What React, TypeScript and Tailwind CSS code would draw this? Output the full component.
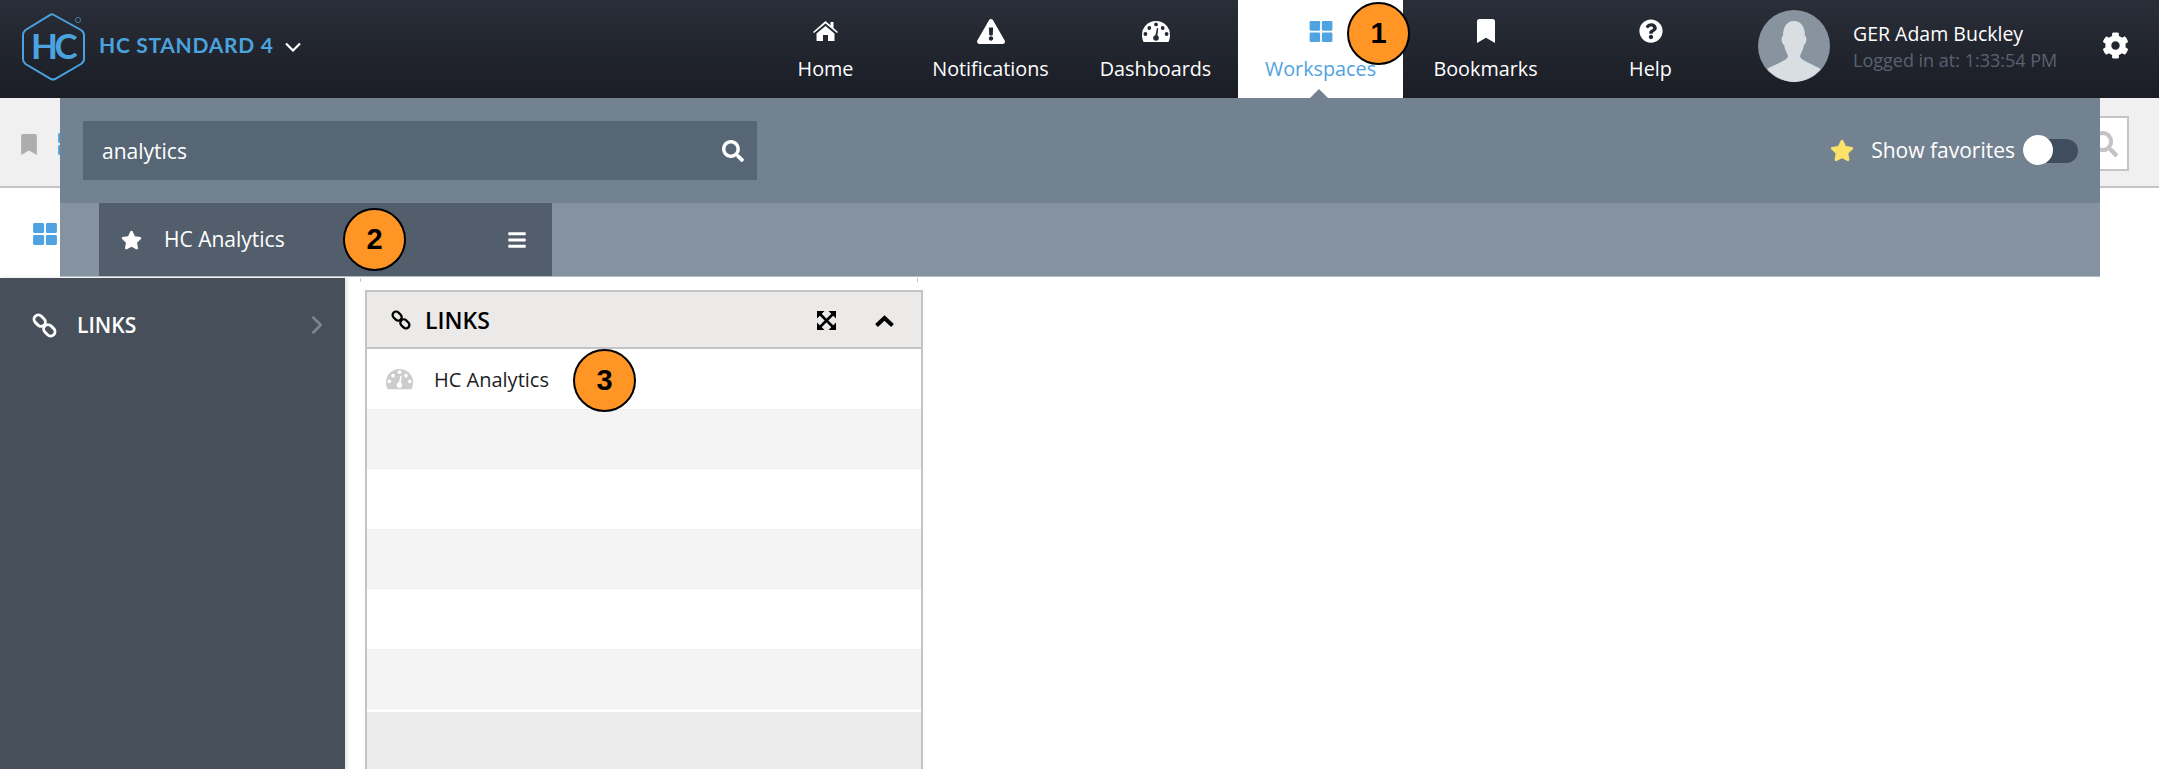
import React from 'react';
import {
  FaBars,
  FaBookmark,
  FaCog,
  FaExclamationTriangle,
  FaQuestionCircle,
  FaSearch,
  FaStar,
} from 'react-icons/fa';
import { LuChevronRight } from 'react-icons/lu';

// Four rounded squares used for workspaces
const GridIcon = ({ className }: { className: string }) => (
  <svg viewBox="0 0 26 24" className={className} fill="currentColor">
    <rect x="0" y="0" width="12" height="11" rx="1.5" />
    <rect x="14" y="0" width="12" height="11" rx="1.5" />
    <rect x="0" y="13" width="12" height="11" rx="1.5" />
    <rect x="14" y="13" width="12" height="11" rx="1.5" />
  </svg>
);

const HomeIcon = ({ className }: { className: string }) => (
  <svg viewBox="0 0 25 20" className={className} fill="currentColor">
    <path d="M12.5 0 L0 11 L1 12 L12.5 2.6 L24 12 L25 11 L20.5 7 V1 H17.5 V4.3 Z" />
    <path d="M3.5 12.4 L12.5 5 L21.5 12.4 V20 H15 V14 H10 V20 H3.5 Z" />
  </svg>
);

// Half disc gauge with punched out dots and needle
const GaugeIcon = ({ className }: { className: string }) => (
  <svg viewBox="0 0 28 21" className={className}>
    <path fill="currentColor" d="M14 0 A14 14 0 0 1 28 14 C28 16.5 27.4 19 26.4 21 H1.6 C0.6 19 0 16.5 0 14 A14 14 0 0 1 14 0 Z" />
    <g fill="var(--hole)">
      <circle cx="14" cy="3.4" r="1.9" />
      <circle cx="7.3" cy="7" r="1.9" />
      <circle cx="20.7" cy="7" r="1.9" />
      <circle cx="3.4" cy="13" r="1.9" />
      <circle cx="24.6" cy="13" r="1.9" />
      <circle cx="14" cy="17" r="2.8" />
      <path d="M13 16 L15 7 L16.2 7.3 L15.2 16.5 Z" />
    </g>
  </svg>
);

// Two open chain links running from top left to bottom right
const ChainIcon = ({ className }: { className: string }) => (
  <svg viewBox="-1 -1 26 26" className={className} fill="none" stroke="currentColor" strokeWidth="3">
    <rect x="0.5" y="2.5" width="13" height="9" rx="4.5" transform="rotate(45 7 7)" />
    <rect x="10.5" y="12.5" width="13" height="9" rx="4.5" transform="rotate(45 17 17)" />
  </svg>
);

const ExpandIcon = ({ className }: { className: string }) => (
  <svg viewBox="0 0 19 19" className={className} fill="currentColor">
    <path d="M0 0 H7.5 L0 7.5 Z M19 0 V7.5 L11.5 0 Z M0 19 V11.5 L7.5 19 Z M19 19 H11.5 L19 11.5 Z" />
    <path d="M3 3 L16 16 M16 3 L3 16" stroke="currentColor" strokeWidth="2.6" />
  </svg>
);

const ChevronUpIcon = ({ className }: { className: string }) => (
  <svg viewBox="0 0 19 12" className={className} fill="none" stroke="currentColor" strokeWidth="4">
    <path d="M1.5 10.5 L9.5 3 L17.5 10.5" />
  </svg>
);

const Logo = () => (
  <svg viewBox="0 0 66 70" className="mt-[5px] h-[70px] w-[66px]">
    <path
      d="M32 1.5 L60 17 Q63 19 63 22 L63 46 Q63 49 60 51 L34 66 Q32 67 30 66 L4.5 51 Q2 49 2 46 L2 22 Q2 19 4.5 17 L30 1.5 Q31 1 32 1.5 Z"
      fill="none"
      stroke="#4aa3df"
      strokeWidth="2"
    />
    <text x="10" y="46" fill="#4aa3df" fontSize="35" fontWeight="700" letterSpacing="-3.5" fontFamily="Lato, sans-serif">
      HC
    </text>
    <circle cx="57" cy="7" r="2.6" fill="none" stroke="#3b7aa8" strokeWidth="1" />
  </svg>
);

const Avatar = () => (
  <svg viewBox="0 0 72 72" className="h-[72px] w-[72px]">
    <circle cx="36" cy="36" r="36" fill="#87939f" />
    <path
      d="M36 11 C44 11 47 18 47 26 C49 26 49 33 46 35 C45 40 43 43 42 46 C42 50 52 53 63 59 C56 67 46 72 36 72 C26 72 16 67 9 59 C20 53 30 50 30 46 C29 43 27 40 26 35 C23 33 23 26 25 26 C25 18 28 11 36 11 Z"
      fill="#d9dee2"
    />
  </svg>
);

const Badge = ({ n, className }: { n: number; className: string }) => (
  <div
    className={`absolute flex h-[63px] w-[63px] items-center justify-center rounded-full border-2 border-black bg-[#ff9524] font-['Liberation_Sans',sans-serif] text-[29px] font-bold text-black ${className}`}
  >
    {n}
  </div>
);

const navItems = [
  { label: 'Home', icon: <HomeIcon className="h-[20px] w-[25px]" /> },
  { label: 'Notifications', icon: <FaExclamationTriangle className="h-[25px] w-[28px]" /> },
  { label: 'Dashboards', icon: <GaugeIcon className="h-[21px] w-[28px] [--hole:#262a33]" /> },
  { label: 'Workspaces', icon: <GridIcon className="h-[21px] w-[26px]" />, active: true },
  { label: 'Bookmarks', icon: <FaBookmark className="h-[24px] w-[20px]" /> },
  { label: 'Help', icon: <FaQuestionCircle className="h-[24px] w-[24px]" /> },
];

const NavBar = () => (
  <header className="flex h-[98px] items-center bg-gradient-to-b from-[#2a2e38] to-[#1a1d25] text-white">
    <div className="mb-[8px] flex w-[743px] items-center pl-[21px]">
      <Logo />
      <span className="ml-[12px] font-['Lato',sans-serif] text-[21px] font-bold tracking-[0.7px] text-[#4aa3df]">HC STANDARD 4</span>
      <svg viewBox="0 0 16 10" className="ml-[11px] mt-[4px] h-[10px] w-[16px]" fill="none" stroke="white" strokeWidth="2.2">
        <path d="M1 1.5 L8 8.5 L15 1.5" />
      </svg>
    </div>
    {navItems.map((item) => (
      <div
        key={item.label}
        className={`relative flex h-full w-[165px] flex-col items-center pt-[18px] ${item.active ? 'bg-white text-[#4fa3e0]' : ''}`}
      >
        <div className="flex h-[26px] items-center">{item.icon}</div>
        <span className="mt-[12px] text-[19.8px] leading-[26px]">{item.label}</span>
      </div>
    ))}
    <div className="mb-[7px] flex items-center">
      <div className="ml-[25px]">
        <Avatar />
      </div>
      <div className="ml-[23px] flex w-[249px] flex-col pt-[2px]">
        <span className="text-[19.5px] leading-[26px]">GER Adam Buckley</span>
        <span className="mt-[1px] text-[18px] leading-[24px] text-[#596270]">Logged in at: 1:33:54 PM</span>
      </div>
      <FaCog className="h-[27px] w-[27px]" />
    </div>
  </header>
);

const Toolbar = () => (
  <div className="flex h-[90px] items-start justify-between border-b-2 border-[#c4c4c4] bg-[#f0f0f0]">
    <div className="flex items-center pl-[20px] pt-[35px]">
      <FaBookmark className="h-[21px] w-[18px] text-[#adadad]" />
      <GridIcon className="ml-[20px] h-[22px] w-[24px] text-[#4fa3e0]" />
    </div>
    <div className="mr-[30px] mt-[18px] flex h-[55px] w-[60px] items-center justify-end border-2 border-l-0 border-[#c4c4c4] bg-white pr-[9px]">
      <FaSearch className="h-[26px] w-[26px] text-[#c4c4c4]" />
    </div>
  </div>
);

const WorkspacePanel = () => (
  <div className="absolute left-[60px] top-[98px] w-[2040px]">
    <div className="flex h-[105px] items-center justify-between bg-[#738291] pl-[23px] pr-[22px]">
      <div className="flex h-[59px] w-[674px] items-center justify-between bg-[#576675] pl-[19px] pr-[13px] text-white">
        <span className="pt-[2px] text-[21px]">analytics</span>
        <FaSearch className="h-[22px] w-[22px]" />
      </div>
      <div className="flex items-center text-white">
        <FaStar className="h-[23px] w-[24px] text-[#fde26a]" />
        <span className="ml-[17px] text-[21px]">Show favorites</span>
        <div className="relative ml-[8px] h-[24px] w-[55px] rounded-full bg-[#3f4d5e]">
          <div className="absolute left-0 top-[-4px] h-[30px] w-[30px] rounded-full bg-white" />
        </div>
      </div>
    </div>
    <div className="h-[74px] border-b border-[#b5bdc7] bg-[#8592a0] pl-[39px]">
      <div className="flex h-full w-[453px] items-center bg-[#535e6c] pl-[22px] pr-[25px] text-white">
        <FaStar className="h-[20px] w-[21px]" />
        <span className="ml-[22px] flex-1 text-[21px]">HC Analytics</span>
        <FaBars className="h-[20px] w-[20px]" />
      </div>
    </div>
  </div>
);

const Sidebar = () => (
  <aside className="flex w-[345px] items-start justify-between bg-[#474f5b] pl-[32px] pr-[13px] pt-[32px] text-white shadow-[2px_0_4px_rgba(0,0,0,0.12)]">
    <div className="flex h-[30px] items-center">
      <ChainIcon className="h-[25px] w-[25px]" />
      <span className="ml-[20px] pt-[2px] text-[21px] font-semibold">LINKS</span>
    </div>
    <LuChevronRight className="h-[30px] w-[30px] text-[#7d8793]" />
  </aside>
);

const LinksCard = () => (
  <div className="flex flex-1 flex-col border-x-2 border-t-2 border-[#c4c4c4]">
    <div className="flex h-[57px] items-center border-b-2 border-[#c4c4c4] bg-[#ebeae8] pl-[24px] pr-[27px] text-black">
      <ChainIcon className="h-[20px] w-[20px]" />
      <span className="ml-[14px] flex-1 pt-[2px] text-[23px] font-semibold">LINKS</span>
      <ExpandIcon className="mt-[2px] h-[19px] w-[19px]" />
      <ChevronUpIcon className="ml-[39px] mt-[2px] h-[12px] w-[19px]" />
    </div>
    <div className="flex h-[60px] items-center pl-[19px] text-[#1d1d1d]">
      <GaugeIcon className="h-[22px] w-[27px] text-[#cccccc] [--hole:#ffffff]" />
      <span className="ml-[21px] pt-[2px] text-[20px]">HC Analytics</span>
    </div>
    <div className="h-[60px] border-y border-[#eeeeee] bg-[#f4f4f4]" />
    <div className="h-[60px]" />
    <div className="h-[60px] border-y border-[#eeeeee] bg-[#f4f4f4]" />
    <div className="h-[60px]" />
    <div className="h-[60px] border-y border-[#eeeeee] bg-[#f4f4f4]" />
    <div className="mt-[3px] flex-1 bg-[#ececec]" />
  </div>
);

export default function App() {
  return (
    <div className="relative flex h-[769px] w-[2159px] flex-col overflow-hidden bg-white font-['Open_Sans',sans-serif]">
      <NavBar />
      <Toolbar />
      <div className="flex h-[90px] items-start pl-[32px] pt-[35px]">
        <GridIcon className="h-[22px] w-[26px] text-[#4fa3e0]" />
      </div>
      <div className="flex min-h-0 flex-1">
        <Sidebar />
        <main className="flex w-[578px] flex-col pl-[20px]">
          <div className="-ml-[5px] mb-[8px] mr-[5px] h-[4px] border-x border-[#c4c4c4]" />
          <LinksCard />
        </main>
      </div>
      <WorkspacePanel />
      <div className="absolute left-[1310px] top-[89px] h-0 w-0 border-x-[9px] border-b-[9px] border-x-transparent border-b-[#738291]" />
      <Badge n={1} className="left-[1347px] top-[2px]" />
      <Badge n={2} className="left-[343px] top-[208px]" />
      <Badge n={3} className="left-[573px] top-[349px]" />
    </div>
  );
}
